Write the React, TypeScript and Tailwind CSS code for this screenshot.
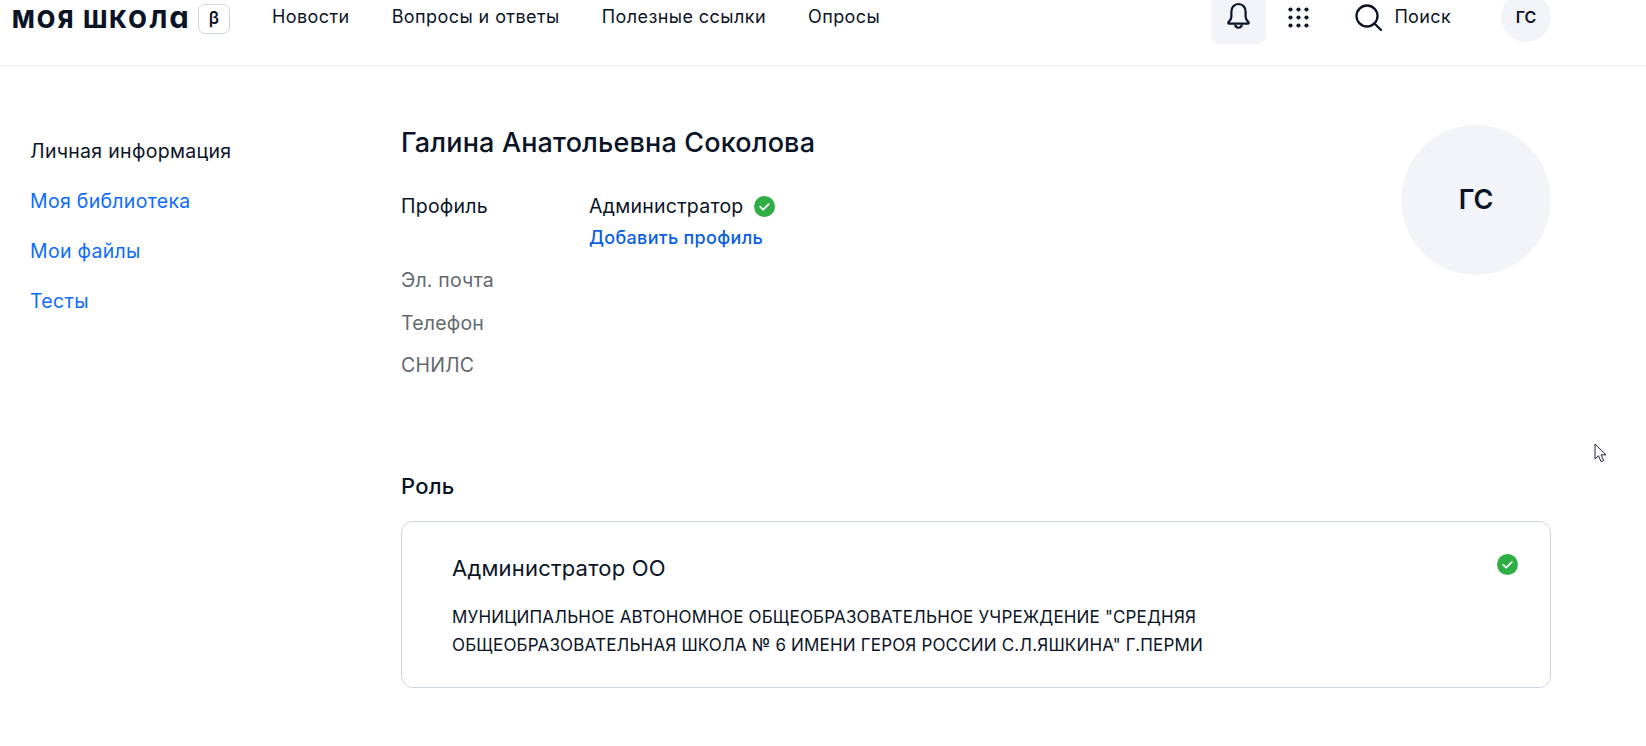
import React from "react";

const font = { fontFamily: "Inter, 'Noto Sans', sans-serif" };

const CheckBadge = () => (
  <svg width="21" height="21" viewBox="0 0 21 21" className="shrink-0">
    <circle cx="10.5" cy="10.5" r="10.5" fill="#2fae45" />
    <path d="M6.2 10.8l3 2.8 5.6-5.4" fill="none" stroke="#fff" strokeWidth="1.8" strokeLinecap="round" strokeLinejoin="round" />
  </svg>
);

const Bell = () => (
  <svg width="25" height="28" viewBox="0 0 26 29" fill="none" stroke="#0b1426" strokeWidth="2.3">
    <path d="M13 2c-4.6 0-7.4 3.4-7.4 8v5.5c0 2-1.3 3.6-3 5.4-.6.7-.2 1.6.7 1.6h19.4c.9 0 1.300-.9.7-1.600-1.700-1.800-3-3.400-3-5.400V10c0-4.600-2.800-8-7.400-8z" strokeLinejoin="round" />
    <path d="M9.500 23.500c.3 2 1.700 3.200 3.500 3.200s3.200-1.200 3.500-3.200" />
  </svg>
);

const Dots = () => (
  <svg width="21" height="21" viewBox="0 0 21 21" fill="#0b1426">
    {[2.5, 10.5, 18.5].map((y) =>
      [2.5, 10.5, 18.5].map((x) => <circle key={`${x}-${y}`} cx={x} cy={y} r="2.100" />)
    )}
  </svg>
);

const Search = () => (
  <svg width="27" height="27" viewBox="0 0 27 27" fill="none" stroke="#0b1426" strokeWidth="2.300" strokeLinecap="round">
    <circle cx="12" cy="12" r="10.500" />
    <path d="M20 20l6 6" />
  </svg>
);

const Cursor = () => (
  <svg width="14" height="20" viewBox="0 0 14 20" className="absolute left-[1594px] top-[443px]">
    <path d="M1 1v15l3.500-3.300 2.600 6 2.600-1.100-2.600-5.800H12z" fill="#fff" stroke="#1a2233" strokeWidth="1" strokeLinejoin="round" />
  </svg>
);

export default function App() {
  return (
    <div className="relative h-[746px] w-[1646px] overflow-hidden bg-white text-[#0b1426]" style={font}>
      <header className="flex h-[66px] items-start border-b border-[#eef0f4]">
        <div className="ml-[12px] mt-[1px] flex w-[218px] items-center">
          <span className="w-[176px] whitespace-nowrap text-[24px] font-extrabold leading-[32px] tracking-[2.200px]">
            МОЯ ШКОЛ<span className="text-[31px] font-bold tracking-normal">ɑ</span>
          </span>
          <span className="ml-[10px] flex h-[30px] w-[32px] items-center justify-center rounded-[7px] border border-[#cdd5e4] text-[17px] font-semibold">
            β
          </span>
        </div>
        <nav className="ml-[42px] mt-[5px] flex gap-[42px] text-[18px] leading-[24px] tracking-[0.42px]">
          <a>Новости</a>
          <a>Вопросы и ответы</a>
          <a>Полезные ссылки</a>
          <a>Опросы</a>
        </nav>
        <div className="ml-auto mr-[95px] flex items-start">
          <div className="flex h-[44px] w-[55px] justify-center rounded-b-[8px] bg-[#f3f4f8] pt-[2px]">
            <Bell />
          </div>
          <div className="ml-[22px] mt-[7px]">
            <Dots />
          </div>
          <div className="ml-[46px] mt-[4px]">
            <Search />
          </div>
          <span className="ml-[12px] mt-[5px] text-[18px] leading-[24px] tracking-[0.35px]">Поиск</span>
          <div className="ml-[50px] -mt-[8px] flex h-[50px] w-[50px] items-center justify-center rounded-full bg-[#f3f4f8] text-[16px] font-semibold">
            ГС
          </div>
        </div>
      </header>

      <div className="flex">
        <aside className="w-[401px] shrink-0 pl-[30px] pt-[73px]">
          <ul className="flex flex-col gap-[26px] text-[19.500px] leading-[24px] tracking-[0.3px] text-[#0d6bff]">
            <li className="text-[#0b1426]">Личная информация</li>
            <li>Моя библиотека</li>
            <li>Мои файлы</li>
            <li>Тесты</li>
          </ul>
        </aside>

        <main className="w-[1150px] pt-[59px]">
          <div className="flex justify-between">
            <div>
              <h1 className="mt-[4px] text-[27px] font-medium leading-[28px] tracking-[0.15px]">Галина Анатольевна Соколова</h1>
              <div className="mt-[37px] flex text-[19.500px] leading-[24px] tracking-[0.25px]">
                <span className="w-[188px]">Профиль</span>
                <div>
                  <div className="flex items-center gap-[10px]">
                    Администратор <CheckBadge />
                  </div>
                  <a className="mt-[8px] block text-[18px] font-medium leading-[24px] tracking-[0.3px] text-[#0b5fdf]">Добавить профиль</a>
                </div>
              </div>
              <div className="mt-[18px] flex flex-col gap-[18.500px] text-[19.500px] leading-[24px] tracking-[0.2px] text-[#62696f]">
                <span>Эл. почта</span>
                <span>Телефон</span>
                <span>СНИЛС</span>
              </div>
            </div>
            <div className="flex h-[150px] w-[150px] items-center justify-center rounded-full bg-[#f3f4f8] text-[27px] font-semibold">
              ГС
            </div>
          </div>

          <h2 className="mt-[95px] text-[22px] font-medium leading-[28px] tracking-[0.2px]">Роль</h2>
          <div className="relative mt-[21px] h-[167px] rounded-[12px] border border-[#cdd5e4] pl-[50px] pt-[32px]">
            <h3 className="text-[22px] leading-[28px] tracking-[0.2px]">Администратор ОО</h3>
            <p className="mt-[21px] w-[800px] text-[17px] leading-[28px] tracking-[0.17px]">
              МУНИЦИПАЛЬНОЕ АВТОНОМНОЕ ОБЩЕОБРАЗОВАТЕЛЬНОЕ УЧРЕЖДЕНИЕ "СРЕДНЯЯ ОБЩЕОБРАЗОВАТЕЛЬНАЯ ШКОЛА № 6 ИМЕНИ ГЕРОЯ РОССИИ С.Л.ЯШКИНА" Г.ПЕРМИ
            </p>
            <div className="absolute right-[32px] top-[32px]">
              <CheckBadge />
            </div>
          </div>
        </main>
      </div>
      <Cursor />
    </div>
  );
}
